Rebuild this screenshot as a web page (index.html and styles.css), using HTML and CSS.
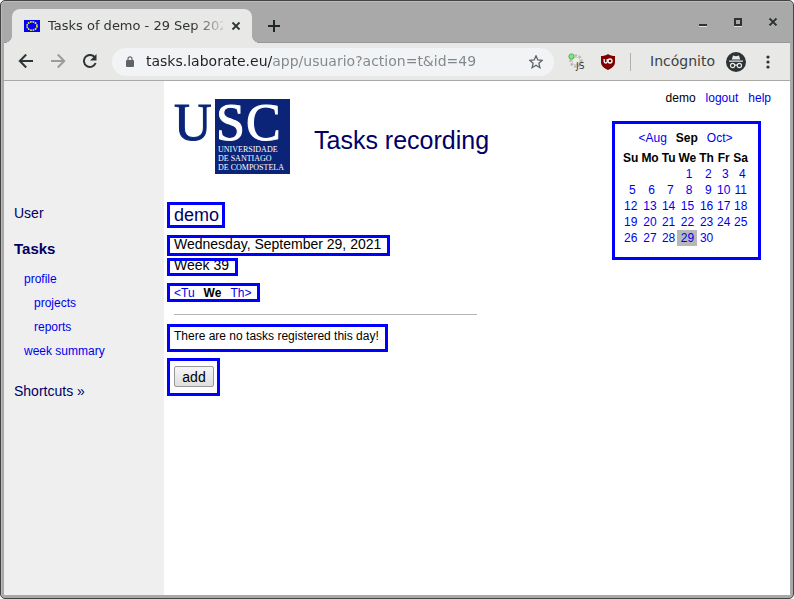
FILE: index.html
```
<!DOCTYPE html>
<html lang="en">
<head>
    <meta charset="UTF-8">
    <meta name="viewport" content="width=device-width, initial-scale=1.0">
    <title>Tasks of demo - 29 Sep 2021</title>
    <link rel="stylesheet" href="styles.css">
</head>
<body>
    <div class="window">
        <div class="tabstrip">
            <div class="tab">
                <svg class="favicon" width="16" height="12" viewBox="0 0 16 12" aria-hidden="true">
                    <rect width="16" height="12" fill="#0000fa"/>
                    <ellipse cx="8" cy="6" rx="5" ry="4.2" fill="none" stroke="#f4f400" stroke-width="1.6" stroke-dasharray="1.7 .7"/>
                </svg>
                <span class="tab-title">Tasks of demo - 29 Sep 2021</span>
                <button class="icon-button" aria-label="Close tab">
                    <svg width="10" height="10" viewBox="0 0 10 10"><path d="M1.5 1.5l7 7M8.5 1.5l-7 7" stroke="#2e3436" stroke-width="1.8"/></svg>
                </button>
            </div>
            <button class="icon-button new-tab" aria-label="New tab">
                <svg width="12" height="12" viewBox="0 0 12 12"><path d="M6 0v12M0 6h12" stroke="#202628" stroke-width="2"/></svg>
            </button>
            <div class="window-buttons">
                <button class="icon-button" aria-label="Minimize">
                    <svg width="10" height="10" viewBox="0 0 10 10"><path d="M1 9.5h8" stroke="#ddd"/><path d="M1 8h8" stroke="#2e3436" stroke-width="2"/></svg>
                </button>
                <button class="icon-button" aria-label="Maximize">
                    <svg width="10" height="10" viewBox="0 0 10 10"><path d="M1 9.5h8" stroke="#ddd"/><rect x="2" y="2" width="6" height="6" fill="none" stroke="#2e3436" stroke-width="2"/></svg>
                </button>
                <button class="icon-button" aria-label="Close">
                    <svg width="10" height="10" viewBox="0 0 10 10"><path d="M1.5 2.5l7 7M8.5 2.5l-7 7" stroke="#ccc" stroke-width="1.5"/><path d="M1.5 1.5l7 7M8.5 1.5l-7 7" stroke="#2e3436" stroke-width="2"/></svg>
                </button>
            </div>
        </div>

        <div class="toolbar">
            <div class="nav-buttons">
                <button class="icon-button" aria-label="Back">
                    <svg width="16" height="16" viewBox="0 0 16 16"><path d="M15 7H2M8.200.5L1.800 7l6.400 6.500" fill="none" stroke="#2e3436" stroke-width="2"/></svg>
                </button>
                <button class="icon-button" aria-label="Forward">
                    <svg width="16" height="16" viewBox="0 0 16 16"><path d="M1 7h13M7.800.5L14.200 7l-6.400 6.500" fill="none" stroke="#9a9c9c" stroke-width="2"/></svg>
                </button>
                <button class="icon-button" aria-label="Reload">
                    <svg width="16" height="16" viewBox="0 0 16 16"><path d="M12.800 3.400A6 6 0 1 0 13.600 9" fill="none" stroke="#2e3436" stroke-width="2"/><path d="M14.500 0v6.500H8z" fill="#2e3436"/></svg>
                </button>
            </div>
            <div class="omnibox">
                <svg width="8" height="12" viewBox="0 0 8 12" aria-hidden="true"><rect y="4" width="8" height="7" rx="1" fill="#5f6368"/><path d="M2 4.500V2.800a2 2 0 0 1 4 0v1.700" fill="none" stroke="#5f6368" stroke-width="1.200"/></svg>
                <input class="url" type="text" aria-label="Address" value="tasks.laborate.eu/app/usuario?action=t&amp;id=49">
                <button class="icon-button" aria-label="Bookmark this page">
                    <svg width="14" height="14" viewBox="0 0 14 14"><path d="M7 .8l1.800 4.200 4.400.3-3.300 3 1 4.400L7 10.300l-3.900 2.400 1-4.400-3.300-3 4.400-.3z" fill="none" stroke="#5f6368" stroke-width="1.300"/></svg>
                </button>
            </div>
            <div class="extensions">
                <button class="icon-button" aria-label="Script toggle">
                    <svg width="18" height="18" viewBox="0 0 18 18">
                        <circle cx="8" cy="8" r="5.500" fill="#eee" stroke="#b4b4b4" stroke-width="2.200" stroke-dasharray="2.400 1.600"/>
                        <circle cx="8" cy="8" r="4" fill="#ececea" stroke="#bbb" stroke-width=".7"/>
                        <circle cx="3.500" cy="3.500" r="2.600" fill="#8fdc8f" stroke="#45b545"/>
                        <text class="script-label" x="8" y="16">JS</text>
                    </svg>
                </button>
                <button class="icon-button" aria-label="uBlock Origin">
                    <svg width="16" height="16" viewBox="0 0 16 16"><path d="M8 0c2 1.500 4.500 2 7 2v6c0 4-3 6-7 8-4-2-7-4-7-8V2c2.500 0 5-.5 7-2z" fill="#800000"/><path d="M4.200 5v2.500a1.500 1.500 0 0 0 3 0V5" fill="none" stroke="#fff" stroke-width="1.300"/><circle cx="10" cy="7" r="2" fill="none" stroke="#fff" stroke-width="1.300"/></svg>
                </button>
            </div>
            <div class="profile">
                <span class="profile-name">Incógnito</span>
                <svg width="20" height="20" viewBox="0 0 20 20" aria-hidden="true">
                    <circle cx="10" cy="10" r="10" fill="#2e3436"/>
                    <path d="M7 3.500l3 .7 3-.7 1.200 4H5.800zM3 8.500h14v1.300H3z" fill="#e8e8e6"/>
                    <g fill="none" stroke="#e8e8e6" stroke-width="1.200"><circle cx="6.600" cy="13.500" r="2.100"/><circle cx="13.400" cy="13.500" r="2.100"/><path d="M8.700 13.200q1.300-.8 2.600 0"/></g>
                </svg>
                <button class="icon-button" aria-label="Menu">
                    <svg width="4" height="14" viewBox="0 0 4 14"><g fill="#2e3436"><circle cx="2" cy="2" r="1.600"/><circle cx="2" cy="7" r="1.600"/><circle cx="2" cy="12" r="1.600"/></g></svg>
                </button>
            </div>
        </div>

        <div class="page">
            <nav class="sidebar">
                <h2>User</h2>
                <h2 class="current">Tasks</h2>
                <ul>
                    <li><a href="#">profile</a>
                        <ul>
                            <li><a href="#">projects</a></li>
                            <li><a href="#">reports</a></li>
                        </ul>
                    </li>
                    <li><a href="#">week summary</a></li>
                </ul>
                <h2>Shortcuts »</h2>
            </nav>

            <main class="content">
                <header class="banner">
                    <svg class="logo" width="116" height="75" viewBox="0 0 116 75" role="img" aria-label="USC">
                        <rect x="41" width="75" height="75" fill="#0b2478"/>
                        <g class="logo-big">
                            <text class="logo-u" x="0" y="41">U</text>
                            <text x="42" y="41">S</text>
                            <text x="72" y="41">C</text>
                        </g>
                        <g class="logo-small">
                            <text x="44" y="53">UNIVERSIDADE</text>
                            <text x="44" y="62">DE SANTIAGO</text>
                            <text x="44" y="71">DE COMPOSTELA</text>
                        </g>
                    </svg>
                    <h1>Tasks recording</h1>
                </header>

                <div class="box user-name">demo</div>
                <div class="box date">Wednesday, September 29, 2021</div>
                <div class="box week">Week 39</div>
                <div class="box days">
                    <a href="#">&lt;Tu</a>
                    <b>We</b>
                    <a href="#">Th&gt;</a>
                </div>
                <hr>
                <div class="box message">There are no tasks registered this day!</div>
                <div class="box actions"><button class="add">add</button></div>
            </main>

            <aside class="side">
                <div class="session">
                    <span>demo</span>
                    <a href="#">logout</a>
                    <a href="#">help</a>
                </div>
                <div class="box calendar">
                    <div class="months">
                        <a href="#">&lt;Aug</a>
                        <b>Sep</b>
                        <a href="#">Oct&gt;</a>
                    </div>
                    <table>
                        <tr><th>Su</th><th>Mo</th><th>Tu</th><th>We</th><th>Th</th><th>Fr</th><th>Sa</th></tr>
                        <tr><td></td><td></td><td></td><td><a href="#">&nbsp;1</a></td><td><a href="#">&nbsp;2</a></td><td><a href="#">&nbsp;3</a></td><td><a href="#">&nbsp;4</a></td></tr>
                        <tr><td><a href="#">&nbsp;5</a></td><td><a href="#">&nbsp;6</a></td><td><a href="#">&nbsp;7</a></td><td><a href="#">&nbsp;8</a></td><td><a href="#">&nbsp;9</a></td><td><a href="#">10</a></td><td><a href="#">11</a></td></tr>
                        <tr><td><a href="#">12</a></td><td><a href="#">13</a></td><td><a href="#">14</a></td><td><a href="#">15</a></td><td><a href="#">16</a></td><td><a href="#">17</a></td><td><a href="#">18</a></td></tr>
                        <tr><td><a href="#">19</a></td><td><a href="#">20</a></td><td><a href="#">21</a></td><td><a href="#">22</a></td><td><a href="#">23</a></td><td><a href="#">24</a></td><td><a href="#">25</a></td></tr>
                        <tr><td><a href="#">26</a></td><td><a href="#">27</a></td><td><a href="#">28</a></td><td class="today"><a href="#">29</a></td><td><a href="#">30</a></td><td></td><td></td></tr>
                    </table>
                </div>
            </aside>
        </div>
    </div>
</body>
</html>
```
FILE: styles.css
```
* {
    box-sizing: border-box;
}
body {
    margin: 0;
    background: #fff;
    font-family: "Liberation Sans", Arial, sans-serif;
    font-size: 12px;
    color: #000;
}
a {
    color: #0000ee;
    text-decoration: none;
}
ul {
    list-style: none;
    margin: 0;
    padding: 0;
}

/* browser window */
.window {
    display: flex;
    flex-direction: column;
    min-height: 100vh;
    border: 1px solid #444;
    border-radius: 5px;
    padding: 0 3px 3px;
    background: #a9a9a9;
    box-shadow: inset 0 1px #bcbcbc, inset 1px 0 #bcb8b6;
}
.icon-button {
    display: flex;
    padding: 0;
    border: 0;
    background: none;
}
.tabstrip {
    display: flex;
    align-items: flex-end;
    height: 42px;
    padding: 0 12px 0 8px;
    border-bottom: 1px solid #989898;
    font-family: "DejaVu Sans", sans-serif;
}
.tab {
    position: relative;
    display: flex;
    align-items: center;
    gap: 8px;
    width: 240px;
    height: 34px;
    margin-bottom: -1px;
    padding: 0 11px 0 12px;
    border-radius: 8px 8px 0 0;
    background: #e8e8e6;
    color: #2e3436;
    font-size: 13px;
}
.tab::before,
.tab::after {
    content: "";
    position: absolute;
    bottom: 0;
    width: 8px;
    height: 8px;
}
.tab::before {
    left: -8px;
    background: radial-gradient(circle at 0 0, transparent 8px, #e8e8e6 8px);
}
.tab::after {
    right: -8px;
    background: radial-gradient(circle at 100% 0, transparent 8px, #e8e8e6 8px);
}
.favicon {
    flex: none;
}
.tab-title {
    flex: 1;
    overflow: hidden;
    line-height: 20px;
    white-space: nowrap;
    mask-image: linear-gradient(to right, #000 145px, transparent 180px);
}
.new-tab {
    margin: 0 0 10px 16px;
}
.window-buttons {
    display: flex;
    gap: 25px;
    margin: 0 0 15px auto;
}
.toolbar {
    display: flex;
    align-items: center;
    height: 38px;
    padding: 0 20px 0 14px;
    border-bottom: 1px solid #a9a9a5;
    background: #e8e8e6;
    font-family: "DejaVu Sans", sans-serif;
}
.nav-buttons {
    display: flex;
    gap: 16px;
}
.omnibox {
    flex: 1;
    display: flex;
    align-items: center;
    gap: 12px;
    height: 28px;
    margin-left: 14px;
    padding: 0 11px 0 14px;
    border-radius: 14px;
    background: #f1f3f4;
}
/* host part dark, path grey */
.url {
    flex: 1;
    min-width: 0;
    padding: 0 0 2px;
    border: 0;
    background: linear-gradient(to right, #202124 126px, #80868b 126px);
    background-clip: text;
    -webkit-background-clip: text;
    color: transparent;
    font-family: "DejaVu Sans", sans-serif;
    font-size: 14px;
}
.extensions {
    display: flex;
    align-items: center;
    gap: 14px;
    margin-left: 14px;
    padding-right: 14px;
    border-right: 1px solid #b0b0b0;
}
.profile {
    display: flex;
    align-items: center;
    gap: 8px;
    margin-left: 19px;
    color: #3c4244;
    font-size: 14px;
}
.profile-name {
    min-width: 68px;
    padding-bottom: 2px;
}
.profile .icon-button {
    margin-left: 12px;
}
.script-label {
    font: 9px "DejaVu Sans", sans-serif;
    fill: #333;
}

/* page */
.page {
    flex: 1;
    display: flex;
    background: #fff;
}
.sidebar {
    width: 160px;
    padding: 122px 10px 0;
    background: #efefef;
}
.sidebar h2 {
    margin: 0 0 16px;
    color: #000066;
    font-size: 14px;
    font-weight: normal;
    line-height: 20px;
}
.sidebar .current {
    margin-bottom: 8px;
    font-size: 15px;
    font-weight: bold;
}
.sidebar li {
    padding-left: 10px;
    line-height: 24px;
}
.sidebar ul + h2 {
    margin-top: 18px;
}
.content {
    flex: 1;
    display: flex;
    flex-direction: column;
    align-items: flex-start;
    padding: 18px 0 18px 3px;
}
.banner {
    display: flex;
    align-items: center;
    gap: 24px;
    margin: 0 0 28px 7px;
}
.banner h1 {
    margin: 0;
    padding: 6px 0 0;
    color: #000066;
    font-size: 25px;
    font-weight: normal;
    line-height: 28px;
}
.logo {
    overflow: visible;
}
.logo text {
    font-family: "Liberation Serif", serif;
}
.logo-big {
    font-size: 52px;
    fill: #fff;
    stroke: #fff;
}
.logo-u {
    fill: #0b2478;
    stroke: #0b2478;
}
.logo-small {
    font-size: 8px;
    fill: #fff;
}
.box {
    border: 3px solid #0000ff;
    padding: 0 6px 0 4px;
}
.user-name {
    margin-bottom: 7px;
    padding-right: 3px;
    color: #000066;
    font-size: 18px;
    line-height: 20px;
}
.date {
    margin-bottom: 2px;
    padding-bottom: 2px;
    font-size: 14px;
    line-height: 13px;
}
/* the week line is tighter than its text */
.week {
    overflow: hidden;
    margin-bottom: 7px;
    padding-bottom: 4px;
    font-size: 14px;
    line-height: 8px;
}
.days {
    display: flex;
    gap: 9px;
    line-height: 14px;
    height: 19px;
}
hr {
    width: 303px;
    margin: 12px 7px 9px;
    border: 0;
    border-top: 1px solid #b4b4b4;
}
.message {
    margin-bottom: 6px;
    padding-bottom: 4px;
    line-height: 18px;
}
.actions {
    padding: 5px 3px 6px 4px;
}
.add {
    display: block;
    width: 40px;
    height: 21px;
    padding: 0;
    border: 1px solid #999;
    border-radius: 2px;
    background: linear-gradient(#f6f6f6, #dedede);
    color: #000;
    font-family: inherit;
    font-size: 14px;
    line-height: 18px;
}
.side {
    display: flex;
    flex-direction: column;
    align-items: flex-end;
    padding: 10px 19px 0 0;
}
.session {
    display: flex;
    gap: 10px;
    line-height: 14px;
}
.calendar {
    margin: 16px 10px 0 0;
    padding: 6px 8px 11px 6px;
}
.months {
    display: flex;
    justify-content: center;
    gap: 9px;
    line-height: 16px;
}
.calendar table {
    margin-top: 4px;
    border-spacing: 1px 0;
}
.calendar th,
.calendar td {
    height: 16px;
    padding: 0 1px;
    line-height: 16px;
    text-align: center;
}
.calendar .today {
    background: #b8b8b8;
}
```
